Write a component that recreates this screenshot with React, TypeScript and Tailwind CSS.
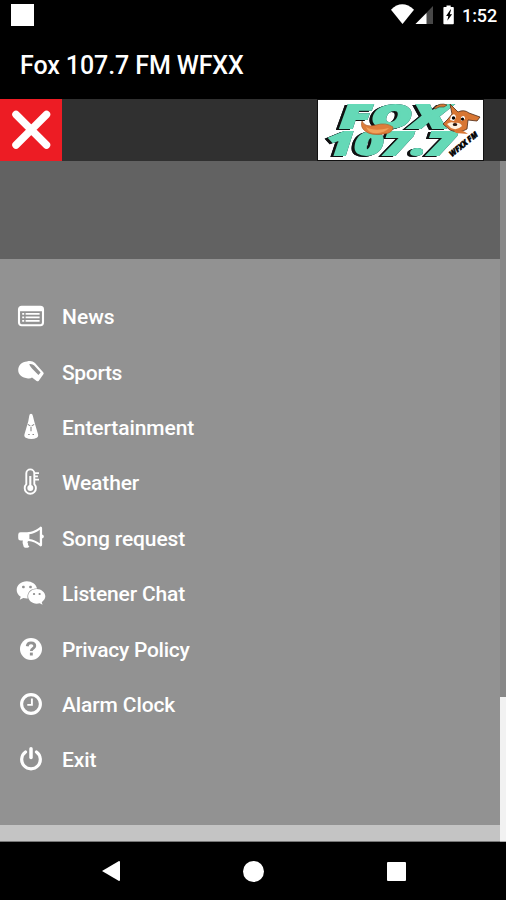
import type { ReactNode } from "react";
import { FaWeixin } from "react-icons/fa";

function NewsIcon() {
  return (
    <svg width="28" height="28" viewBox="0 0 28 28" fill="none">
      <rect x="2" y="4.8" width="24" height="18.4" rx="2.6" stroke="white" strokeWidth="2.1" />
      <path d="M2 9.2V6.5Q2 4.8 4 4.8h20q2 0 2 1.7v2.7z" fill="white" />
      <path
        d="M5.2 11.8h2m1.4 0h14M5.2 15.3h2m1.4 0h14M5.2 18.8h2m1.4 0h14"
        stroke="white"
        strokeWidth="1.8"
      />
    </svg>
  );
}

function WhistleIcon() {
  return (
    <svg width="28" height="28" viewBox="0 0 28 28">
      <path
        d="M1.2 12C1.2 7.5 5 3.5 10 3.5c3-.9 6-.4 8 1.6l8.4 9.4q.8 1-.2 2l-4.6 6.4q-1 .9-2 0L15 19.4q-1.5 1.3-4 1C5 20 1.2 16.5 1.2 12z"
        fill="white"
      />
      <path d="M12.2 6.2q3-.7 5 1.4l6.4 6.9-2.2 2.5-6.4-6.6q-2-2-2.8-4.2z" fill="#929292" />
    </svg>
  );
}

function StageIcon() {
  return (
    <svg width="28" height="28" viewBox="0 0 28 28">
      <path
        d="M14 .8q1.5 0 1.9 2.2l1.3 5.3 3.6 12.2q1.1 3-1 4.3-5.3 2.4-11.1 0-2.1-1.3-1-4.3l3.6-12.2L12.2 3Q12.5.8 14 .8z"
        fill="white"
      />
      <path
        d="M10.8 11.4l2.5 1.5m3.9-1.5l-2.5 1.5M14 13.8v4.5M11.2 21.5h1.5m2.8 0H17"
        stroke="#888"
        strokeWidth="1.1"
      />
    </svg>
  );
}

function ThermometerIcon() {
  return (
    <svg width="28" height="28" viewBox="0 0 28 28" fill="none" stroke="white">
      <path d="M9.3 16.2V5.4a4 4 0 0 1 8 0v10.8a5.6 5.6 0 1 1-8 0z" strokeWidth="1.9" />
      <path d="M13.3 8v10" strokeWidth="2.1" />
      <circle cx="13.3" cy="20" r="3" fill="white" stroke="none" />
      <path d="M17.4 5.1h4.6M17.4 8.4h3.5M17.4 11.7h4.6" strokeWidth="1.7" />
    </svg>
  );
}

function MegaphoneIcon() {
  return (
    <svg width="28" height="28" viewBox="0 0 28 28">
      <path
        fillRule="evenodd"
        fill="white"
        d="M23.5 2.6c1 0 1.6.8 1.6 1.7v6.2q1.8.6 1.8 2t-1.8 2v6.2c0 .9-.6 1.7-1.6 1.7-4-3.4-8-5-12-5.4-1.3.7-1.2 2-.3 2.7-.6.9.2 2 1.2 2.7-.8 1.8-4.2 1.7-5.6.5-.8-2.5-1.7-4-.9-6.3H3.6q-2.4 0-2.4-2.4v-3.5q0-2.4 2.4-2.4h6.5C15 8.3 20 5.7 23.5 2.6zm-.7 3.1c-3.3 2.6-6.8 4.1-10.4 4.6v4.6c3.6.4 7.1 1.9 10.4 4.4z"
      />
    </svg>
  );
}

function HelpIcon() {
  return (
    <svg width="28" height="28" viewBox="0 0 28 28" fill="none">
      <circle cx="14" cy="14" r="11" fill="white" />
      <path
        d="M10.2 11.2c.4-2.4 1.9-3.4 4-3.3 2.1.1 3.6 1.3 3.6 3.1 0 2.4-3.5 2.2-3.5 5"
        stroke="#929292"
        strokeWidth="2.8"
      />
      <path d="M12.9 17.6h2.9v2.9h-2.9z" fill="#929292" />
    </svg>
  );
}

function ClockIcon() {
  return (
    <svg width="28" height="28" viewBox="0 0 28 28" fill="none" stroke="white">
      <circle cx="14" cy="14" r="9.4" strokeWidth="3.1" />
      <path d="M14.9 8.5v6.4h-4.6" strokeWidth="1.9" />
    </svg>
  );
}

function PowerIcon() {
  return (
    <svg width="28" height="28" viewBox="0 0 28 28" fill="none" stroke="white" strokeLinecap="round">
      <path d="M8.5 7a9.3 9.3 0 1 0 11 0" strokeWidth="3.2" />
      <path d="M14 3.8v8.6" strokeWidth="3.5" />
    </svg>
  );
}

type Item = { label: string; icon: ReactNode; tracking: string };

const items: Item[] = [
  { label: "News", icon: <NewsIcon />, tracking: "tracking-[0px]" },
  { label: "Sports", icon: <WhistleIcon />, tracking: "tracking-[-0.35px]" },
  { label: "Entertainment", icon: <StageIcon />, tracking: "tracking-[-0.08px]" },
  { label: "Weather", icon: <ThermometerIcon />, tracking: "tracking-[-0.15px]" },
  { label: "Song request", icon: <MegaphoneIcon />, tracking: "tracking-[-0.12px]" },
  { label: "Listener Chat", icon: <FaWeixin size={30} />, tracking: "tracking-[-0.15px]" },
  { label: "Privacy Policy", icon: <HelpIcon />, tracking: "tracking-[-0.28px]" },
  { label: "Alarm Clock", icon: <ClockIcon />, tracking: "tracking-[-0.12px]" },
  { label: "Exit", icon: <PowerIcon />, tracking: "tracking-[-0.1px]" },
];

function StatusBar() {
  return (
    <div className="flex h-8 items-start justify-between pl-[11px] pr-[9px]">
      <div className="mt-1 h-[22px] w-[23px] bg-white" />
      <div className="flex h-8 items-center">
        <svg width="68" height="32" viewBox="0 0 68 32">
          <path d="M0 9.7Q11-1 23 9.7L11.5 24z" fill="white" />
          <path d="M42 6v18H24.5z" fill="#484848" />
          <path d="M35.5 13v11h-11z" fill="white" />
          <path d="M55.5 7V5.5h4.2V7h2.3q.8 0 .8.8v15.6q0 .8-.8.8h-8.8q-.8 0-.8-.8V7.8q0-.8.8-.8z" fill="white" />
          <path d="M59.5 9.5l-4.4 6.4h2.2l-1 4.8 4.8-6.4h-2.3l1.3-4.8z" fill="black" />
        </svg>
        <span className="ml-[3px] w-[35px] whitespace-nowrap text-[18px] font-medium leading-8 tracking-[-0.1px]">
          1:52
        </span>
      </div>
    </div>
  );
}

function StationLogo() {
  return (
    <svg className="mr-[22px] border border-[#111] bg-white" width="167" height="62" viewBox="0 0 165 60">
      <g
        className="[filter:drop-shadow(-3px_1.5px_0_#111)_drop-shadow(0_0_0.5px_#123)]"
        fontFamily="'Open Sans', 'Liberation Sans', sans-serif"
        fontWeight="800"
        fontStyle="italic"
        fill="#65d9b7"
        stroke="#65d9b7"
        strokeWidth="1.8"
      >
        <text x="22" y="27.5" fontSize="31" textLength="108" lengthAdjust="spacingAndGlyphs">FOX</text>
        <text x="8" y="54.5" fontSize="31" textLength="129" lengthAdjust="spacingAndGlyphs">107.7</text>
      </g>
      <text
        transform="translate(134 57) rotate(-39)"
        fontFamily="'Open Sans', sans-serif"
        fontWeight="800"
        fontStyle="italic"
        fontSize="8"
        fill="black"
        stroke="black"
        strokeWidth="0.5"
        textLength="34"
        lengthAdjust="spacingAndGlyphs"
      >
        WFXX FM
      </text>
      <path
        d="M44 21q3 7 14 4 10-3 17 2 0 6-9 7-13 2-19-3-5-4-3-10z"
        fill="#dd7d3b"
        stroke="#a85421"
        strokeWidth="0.6"
      />
      <path d="M48 27q8 5 23 1-5 6-16 5-5-1-7-6z" fill="#f0a25b" />
      <path d="M116 8q6-6 13-3l-3 2q-5-1-9 2z" fill="#d87633" stroke="#4d2b16" strokeWidth="0.6" />
      <path
        d="M134 14l-2-10 8 8q6-3 11 1l11 4-3 4-9-1-1 9q-8 5-17 1l-7-6 5-5z"
        fill="#d87633"
        stroke="#4d2b16"
        strokeWidth="0.8"
      />
      <path d="M129 24q4-3 8-1 5-1 7 3-5 5-11 2z" fill="#fff1df" />
      <path d="M133 16q4-4 5 1l-2 4-4-1zM143 17q4-3 4 2l-4 2z" fill="white" />
      <circle cx="135.5" cy="18" r="1.7" fill="black" />
      <circle cx="144.5" cy="19" r="1.6" fill="black" />
      <ellipse cx="137" cy="24.5" rx="2.3" ry="1.6" fill="#2a1710" />
      <path d="M136 31q7-2 11 1l3 2-12-1z" fill="#d87633" />
    </svg>
  );
}

export default function App() {
  return (
    <div className="flex h-[900px] w-[506px] flex-col overflow-hidden bg-black font-['Roboto',sans-serif] text-white">
      <StatusBar />
      <h1 className="flex h-[67px] items-center pl-5 text-[25px] font-medium tracking-[-0.1px]">
        <span>Fox 107.7 FM WFXX</span>
      </h1>
      <header className="flex h-[62px] shrink-0 justify-between bg-[#303030]">
        <button className="flex w-[62px] items-center justify-center bg-[#ed1c24]" aria-label="Close">
          <svg width="62" height="62" viewBox="0 0 62 62">
            <path d="M16 15.5L46.5 46M46.5 15.5L16 46" stroke="white" strokeWidth="7.5" strokeLinecap="round" />
          </svg>
        </button>
        <StationLogo />
      </header>

      <main className="flex h-[681px] shrink-0">
        <div className="flex w-[500px] flex-col">
          <div className="h-[98px] bg-[#626262]" />
          <nav className="h-[566px] bg-[#929292] pt-[29.5px]">
            {items.map((item) => (
              <a key={item.label} className="flex h-[55.4px] items-center">
                <span className="ml-4 flex w-[30px] justify-center">{item.icon}</span>
                <span className={`ml-4 whitespace-nowrap pt-0.5 text-[21px] font-medium leading-7 ${item.tracking}`}>
                  {item.label}
                </span>
              </a>
            ))}
          </nav>
          <div className="flex-1 border-b border-[#777] bg-[#c4c4c4]" />
        </div>
        <div className="flex w-1.5 flex-col bg-[#888]">
          <div className="h-[536px]" />
          <div className="flex-1 border-b border-[#aaa] bg-[#f2f2f2]" />
        </div>
      </main>

      <footer className="flex h-[58px] shrink-0 items-center pl-[102px]">
        <svg width="18" height="22" viewBox="0 0 18 22">
          <path d="M0 11L17 1q1 0 1 1v18q0 1-1 1z" fill="white" />
        </svg>
        <div className="ml-[123px] h-[21px] w-[21px] rounded-full bg-white" />
        <div className="ml-[123px] h-[19px] w-[19px] rounded-[1px] bg-white" />
      </footer>
    </div>
  );
}
